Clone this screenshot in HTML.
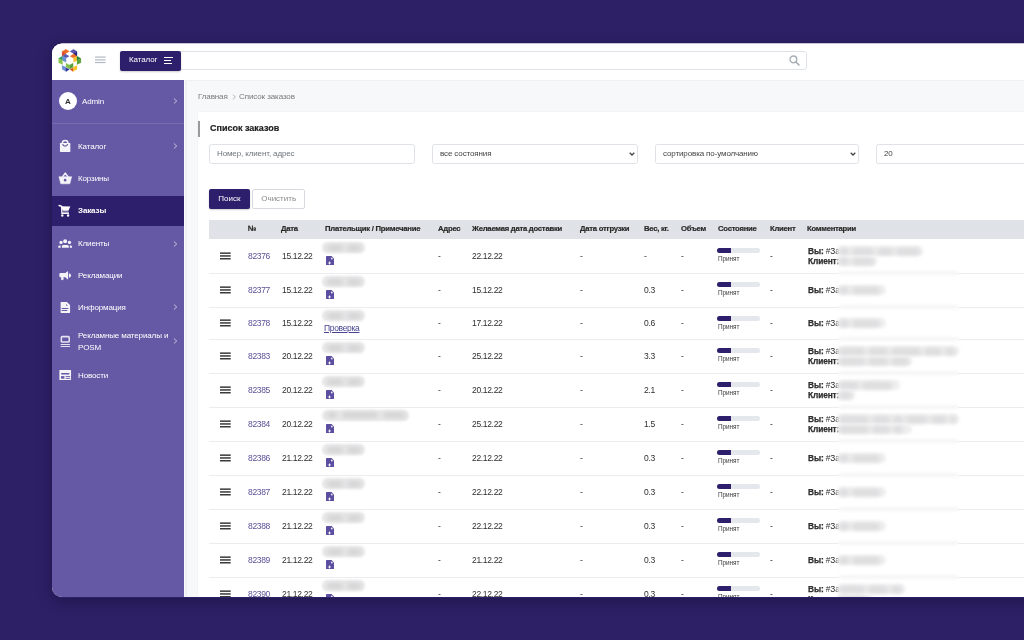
<!DOCTYPE html><html><head><meta charset="utf-8"><style>
*{margin:0;padding:0;box-sizing:border-box}
html,body{width:1024px;height:640px;overflow:hidden}
body{font-family:"Liberation Sans",sans-serif;background:#2c1f63;position:relative;color:#333}
.bgglow{position:absolute;left:0;top:0;width:1024px;height:640px;background:#2d2066}
.clip{position:absolute;left:0;top:0;width:1024px;height:640px;clip-path:inset(43.5px 0 43px 52px round 10px 0 0 10px);background:#f7f8fa}
.a{position:absolute}
.t{position:absolute;white-space:nowrap;line-height:10px;height:10px;will-change:transform}
.hdr{left:52px;top:43px;width:972px;height:37.2px;background:#fff;box-shadow:0 0.6px 1.5px rgba(0,0,0,.09)}
.side{left:52px;top:80px;width:132px;height:520px;background:#6559a5}
.menu{color:#fff;font-size:8px;letter-spacing:-0.12px}
.chev{position:absolute;width:4px;height:4px;border-right:1px solid rgba(255,255,255,.75);border-top:1px solid rgba(255,255,255,.75);transform:rotate(45deg)}
.card{left:198px;top:111.5px;width:830px;height:500px;background:#fff;box-shadow:0 0 1px rgba(0,0,0,.12)}
.inp{position:absolute;height:19.5px;border:1px solid #dfe2e7;border-radius:2.5px;background:#fff;font-size:8px;color:#6f757c;line-height:18.6px;padding-left:7px;white-space:nowrap;letter-spacing:-0.12px;will-change:transform}
.th{font-size:7.7px;font-weight:bold;color:#2a2a2a;letter-spacing:-0.25px;-webkit-text-stroke:0.2px #2a2a2a}
.cm{font-size:8.3px;color:#2e2e2e;letter-spacing:-0.1px}
.cm b{-webkit-text-stroke:0.25px #2e2e2e}
.td{font-size:8.5px;color:#2e2e2e;letter-spacing:-0.33px}
.num{color:#5b5196}
.burg{position:absolute;width:10.7px;height:7.4px;border-top:1.8px solid #3f3f3f;border-bottom:1.8px solid #3f3f3f}
.burg:after{content:"";position:absolute;left:0;right:0;top:1.0px;height:1.8px;background:#3f3f3f}
.blob{position:absolute;background:#d4d4d5;border-radius:4px;filter:blur(2.2px)}
.pill{position:absolute;background:#e8e8e9;border-radius:6px;filter:blur(1.1px)}
.cb{position:absolute;background:#dcdcde;border-radius:4px;filter:blur(2.2px);height:7px}
.cbp{position:absolute;background:#efeff0;border-radius:5px;filter:blur(1.8px);height:10px}
.bar{position:absolute;width:43px;height:4.5px;border-radius:3px;background:#e4e7ec}
.bar:before{content:"";position:absolute;left:0;top:0;width:14px;height:4.5px;border-radius:3px 0 0 3px;background:#2d1f6b}
.st{font-size:6.4px;color:#3d3d3d;letter-spacing:-0.05px}
</style></head><body>
<div class="bgglow"></div>
<div class="a" style="left:52px;top:43.5px;width:1000px;height:554px;border-radius:9px;box-shadow:0 3px 14px rgba(10,5,30,.35)"></div>
<div class="clip">
<div class="a hdr"></div>
<svg class="a" style="left:56px;top:47px" width="28" height="28" viewBox="0 0 640 640">
<polygon points="230,250 310,205 400,250 400,350 310,400 230,350" fill="#fff"/>
<polygon points="140,100 225,50 305,100 220,150" fill="#ee6a22" stroke="#ee6a22" stroke-width="6" stroke-linejoin="round"/>
<polygon points="140,100 220,150 220,160 150,210 140,205" fill="#cf4a25" stroke="#cf4a25" stroke-width="6" stroke-linejoin="round"/>
<polygon points="320,100 400,50 480,100 400,150" fill="#5d55ad" stroke="#5d55ad" stroke-width="6" stroke-linejoin="round"/>
<polygon points="400,150 480,100 480,205 450,215" fill="#262580" stroke="#262580" stroke-width="6" stroke-linejoin="round"/>
<polygon points="150,210 220,160 300,210 230,250" fill="#5a59b3" stroke="#5a59b3" stroke-width="6" stroke-linejoin="round"/>
<polygon points="320,210 400,160 480,210 400,250" fill="#ee6e25" stroke="#ee6e25" stroke-width="6" stroke-linejoin="round"/>
<polygon points="60,260 140,210 150,210 150,300 140,300" fill="#279a5b" stroke="#279a5b" stroke-width="6" stroke-linejoin="round"/>
<polygon points="150,210 230,250 230,350 150,310" fill="#6a8fd4" stroke="#6a8fd4" stroke-width="6" stroke-linejoin="round"/>
<polygon points="400,250 480,210 480,310 400,350" fill="#f7c12c" stroke="#f7c12c" stroke-width="6" stroke-linejoin="round"/>
<polygon points="480,210 570,260 480,300" fill="#1f7f3d" stroke="#1f7f3d" stroke-width="6" stroke-linejoin="round"/>
<polygon points="60,260 140,300 150,310 150,400 60,360" fill="#8cc44c" stroke="#8cc44c" stroke-width="6" stroke-linejoin="round"/>
<polygon points="480,300 570,260 570,360 480,400" fill="#5fa43a" stroke="#5fa43a" stroke-width="6" stroke-linejoin="round"/>
<polygon points="230,370 310,410 310,500 230,460" fill="#86c14b" stroke="#86c14b" stroke-width="6" stroke-linejoin="round"/>
<polygon points="310,410 390,370 390,460 310,500" fill="#56a03a" stroke="#56a03a" stroke-width="6" stroke-linejoin="round"/>
<polygon points="140,420 230,460 230,560 140,510" fill="#6c8fd5" stroke="#6c8fd5" stroke-width="6" stroke-linejoin="round"/>
<polygon points="230,480 305,510 230,560" fill="#27258a" stroke="#27258a" stroke-width="6" stroke-linejoin="round"/>
<polygon points="320,510 390,480 390,560" fill="#d9441f" stroke="#d9441f" stroke-width="6" stroke-linejoin="round"/>
<polygon points="390,460 480,420 480,510 390,560" fill="#f8c32a" stroke="#f8c32a" stroke-width="6" stroke-linejoin="round"/>
</svg>
<svg class="a" style="left:95px;top:55px" width="11" height="9" viewBox="0 0 11 9"><rect x="0" y="1.45" width="10.6" height="1.25" fill="#b6bcc5"/><rect x="0" y="4.25" width="10.6" height="1.25" fill="#b6bcc5"/><rect x="0" y="6.9" width="10.6" height="1.25" fill="#b6bcc5"/></svg>
<div class="a" style="left:178px;top:50.5px;width:629px;height:19.5px;border:1px solid #dfe3e8;border-radius:3px;background:#fff"></div>
<svg class="a" style="left:789px;top:55px" width="11" height="11" viewBox="0 0 11 11"><circle cx="4.4" cy="4.4" r="3.4" fill="none" stroke="#a9afb7" stroke-width="1.3"/><line x1="6.9" y1="6.9" x2="10" y2="10" stroke="#a9afb7" stroke-width="1.6" stroke-linecap="round"/></svg>
<div class="a" style="left:120px;top:50.5px;width:61px;height:20px;background:#2d1f6b;border-radius:2px;box-shadow:0 1px 2px rgba(0,0,0,.2)"></div>
<div class="t" style="left:129.3px;top:54.6px;color:#fff;font-size:8px;letter-spacing:-0.1px">Каталог</div>
<div class="a" style="left:164px;top:56.5px;width:9px;height:1px;background:#fff"></div>
<div class="a" style="left:164px;top:59.5px;width:6.5px;height:1px;background:#fff"></div>
<div class="a" style="left:164px;top:62.5px;width:8px;height:1px;background:#fff"></div>
<div class="a side"></div>
<div class="a" style="left:184px;top:80px;width:1.2px;height:520px;background:#fafaf7"></div>
<div class="a" style="left:185.2px;top:80px;width:2.2px;height:520px;background:#eff0f3"></div>
<div class="a" style="left:58.6px;top:92px;width:18px;height:18px;border-radius:50%;background:#fff"></div>
<div class="t" style="left:58.6px;top:96.5px;width:18px;text-align:center;font-size:8px;font-weight:bold;color:#333">A</div>
<div class="t menu" style="left:82px;top:96.5px">Admin</div>
<svg class="a" style="left:172px;top:96.5px" width="6" height="8" viewBox="0 0 6 8"><path d="M2.2,1.75 L4.7,4 L2.2,6.25" fill="none" stroke="rgba(255,255,255,.7)" stroke-width="0.9" stroke-linecap="round" stroke-linejoin="round"/></svg>
<div class="a" style="left:52px;top:123px;width:132px;height:1px;background:rgba(255,255,255,.12)"></div>
<div class="t menu" style="left:78px;top:141.5px;font-weight:normal">Каталог</div>
<svg class="a" style="left:56px;top:137px" width="18" height="18" viewBox="0 0 640 640"><rect x="140" y="210" width="370" height="320" rx="22" fill="#f4f3f8"/><path d="M225,215 C225,90 425,90 425,215" fill="none" stroke="#f4f3f8" stroke-width="55"/><path d="M235,255 C260,350 390,350 415,255" fill="none" stroke="#6559a5" stroke-width="45"/></svg>
<svg class="a" style="left:172px;top:142.2px" width="6" height="8" viewBox="0 0 6 8"><path d="M2.2,1.75 L4.7,4 L2.2,6.25" fill="none" stroke="rgba(255,255,255,.7)" stroke-width="0.9" stroke-linecap="round" stroke-linejoin="round"/></svg>
<div class="t menu" style="left:78px;top:173.5px;font-weight:normal">Корзины</div>
<svg class="a" style="left:56px;top:170px" width="18" height="18" viewBox="0 0 640 640"><path d="M230,245 L330,110 L430,245" fill="none" stroke="#f4f3f8" stroke-width="55" stroke-linejoin="round"/><path d="M105,240 L555,240 L490,490 L170,490 Z" fill="#f4f3f8" stroke="#f4f3f8" stroke-width="20" stroke-linejoin="round"/><circle cx="325" cy="360" r="45" fill="#6559a5"/></svg>
<div class="a" style="left:52px;top:196px;width:132px;height:29.6px;background:#2d1f6b"></div>
<div class="t menu" style="left:78px;top:206px;font-weight:bold">Заказы</div>
<svg class="a" style="left:56px;top:202px" width="18" height="18" viewBox="0 0 640 640"><path d="M110,125 L190,150" stroke="#fff" stroke-width="50" stroke-linecap="round"/><path d="M190,150 L510,160 L440,310 L240,310 Z" fill="#fff"/><path d="M200,160 L210,400 L460,400" fill="none" stroke="#fff" stroke-width="45"/><rect x="250" y="335" width="200" height="40" fill="#b9b3d6"/><circle cx="225" cy="478" r="42" fill="#fff"/><circle cx="430" cy="478" r="42" fill="#fff"/></svg>
<div class="t menu" style="left:78px;top:239px;font-weight:normal">Клиенты</div>
<svg class="a" style="left:56px;top:234px" width="18" height="18" viewBox="0 0 640 640"><circle cx="325" cy="260" r="70" fill="#f4f3f8"/><circle cx="180" cy="300" r="58" fill="#f4f3f8"/><circle cx="480" cy="300" r="58" fill="#f4f3f8"/><path d="M210,490 L210,440 Q210,390 270,390 L395,390 Q455,390 455,440 L455,490 Z" fill="#f4f3f8"/><path d="M80,490 L80,450 Q80,410 130,410 L165,410 L165,490 Z" fill="#f4f3f8"/><path d="M570,490 L570,450 Q570,410 520,410 L490,410 L490,490 Z" fill="#f4f3f8"/></svg>
<svg class="a" style="left:172px;top:239.7px" width="6" height="8" viewBox="0 0 6 8"><path d="M2.2,1.75 L4.7,4 L2.2,6.25" fill="none" stroke="rgba(255,255,255,.7)" stroke-width="0.9" stroke-linecap="round" stroke-linejoin="round"/></svg>
<div class="t menu" style="left:78px;top:270.5px;font-weight:normal">Рекламации</div>
<svg class="a" style="left:56px;top:266px" width="18" height="18" viewBox="0 0 640 640"><path d="M120,290 Q120,250 160,250 L330,250 L430,180 L430,490 L330,400 L160,400 Q120,400 120,360 Z" fill="#f4f3f8"/><rect x="180" y="380" width="90" height="125" rx="40" fill="#f4f3f8"/><path d="M460,255 Q535,265 535,335 Q535,405 460,415 Z" fill="#f4f3f8"/></svg>
<div class="t menu" style="left:78px;top:302.5px;font-weight:normal">Информация</div>
<svg class="a" style="left:56px;top:298px" width="18" height="18" viewBox="0 0 640 640"><path d="M165,155 Q165,140 180,140 L390,140 L500,250 L500,515 Q500,530 485,530 L180,530 Q165,530 165,515 Z" fill="#f4f3f8"/><path d="M355,210 L355,260 Q355,275 370,275 L420,275 Z" fill="#6559a5"/><path d="M215,375 L425,375 M215,445 L385,445" stroke="#6559a5" stroke-width="40" stroke-linecap="round"/></svg>
<svg class="a" style="left:172px;top:303.2px" width="6" height="8" viewBox="0 0 6 8"><path d="M2.2,1.75 L4.7,4 L2.2,6.25" fill="none" stroke="rgba(255,255,255,.7)" stroke-width="0.9" stroke-linecap="round" stroke-linejoin="round"/></svg>
<div class="t menu" style="left:78px;top:330.5px;">Рекламные материалы и</div>
<div class="t menu" style="left:78px;top:343px">POSM</div>
<svg class="a" style="left:172px;top:336.5px" width="6" height="8" viewBox="0 0 6 8"><path d="M2.2,1.75 L4.7,4 L2.2,6.25" fill="none" stroke="rgba(255,255,255,.7)" stroke-width="0.9" stroke-linecap="round" stroke-linejoin="round"/></svg>
<div class="t menu" style="left:78px;top:371px">Новости</div>
<svg class="a" style="left:56px;top:330px" width="18" height="18" viewBox="0 0 640 640"><rect x="190" y="235" width="280" height="195" rx="30" fill="none" stroke="#e6e3f0" stroke-width="55"/><path d="M165,515 L495,515 M165,585 L495,585" stroke="#e6e3f0" stroke-width="38"/></svg>
<svg class="a" style="left:56px;top:366px" width="18" height="18" viewBox="0 0 640 640"><rect x="120" y="140" width="415" height="360" rx="15" fill="#f4f3f8"/><rect x="180" y="250" width="300" height="50" rx="25" fill="#6559a5"/><rect x="180" y="360" width="120" height="90" fill="#6559a5"/><path d="M360,372 L490,372 M360,440 L490,440" stroke="#6559a5" stroke-width="32" stroke-linecap="round"/></svg>
<div class="t" style="left:197.9px;top:92px;font-size:8px;color:#7a7a7a;letter-spacing:-0.12px">Главная</div>
<svg class="a" style="left:231.5px;top:94px" width="5" height="6" viewBox="0 0 5 6"><path d="M0.8,0.6 L3.4,3 L0.8,5.4" fill="none" stroke="#999" stroke-width="0.7"/></svg>
<div class="t" style="left:238.7px;top:92px;font-size:8px;color:#7a7a7a;letter-spacing:-0.1px">Список заказов</div>
<div class="a card"></div>
<div class="a" style="left:198px;top:121px;width:1.8px;height:16px;background:#9a9a9a"></div>
<div class="t" style="left:209.7px;top:123px;font-size:9px;font-weight:bold;color:#1f1f1f;-webkit-text-stroke:0.2px #1f1f1f">Список заказов</div>
<div class="inp" style="left:209px;top:144px;width:206px">Номер, клиент, адрес</div>
<div class="inp" style="left:432px;top:144px;width:206px;color:#444">все состояния</div>
<div class="inp" style="left:655px;top:144px;width:204px;color:#444">сортировка по-умолчанию</div>
<svg class="a" style="left:629.3px;top:152px" width="6" height="4" viewBox="0 0 6 4"><path d="M0.7,0.8 L3,3 L5.3,0.8" fill="none" stroke="#444" stroke-width="1.3"/></svg>
<svg class="a" style="left:850.0px;top:152px" width="6" height="4" viewBox="0 0 6 4"><path d="M0.7,0.8 L3,3 L5.3,0.8" fill="none" stroke="#444" stroke-width="1.3"/></svg>
<div class="inp" style="left:876px;top:144px;width:206px;color:#444">20</div>
<div class="a" style="left:209.3px;top:189px;width:40.7px;height:19.5px;background:#2d1f6b;border-radius:2px;box-shadow:0 1px 2px rgba(0,0,0,.2)"></div>
<div class="t" style="left:209.3px;top:194.3px;width:40.7px;text-align:center;font-size:8px;color:#fff">Поиск</div>
<div class="a" style="left:252.2px;top:189px;width:53.3px;height:19.5px;border:1px solid #d6d9de;border-radius:2px;background:#fff"></div>
<div class="t" style="left:252.2px;top:194.3px;width:53.3px;text-align:center;font-size:8px;color:#888">Очистить</div>
<div class="a" style="left:209.2px;top:220px;width:820px;height:18.8px;background:#dfe2e6"></div>
<div class="t th" style="left:248.4px;top:223.8px">№</div>
<div class="t th" style="left:281.2px;top:223.8px">Дата</div>
<div class="t th" style="left:324.5px;top:223.8px">Плательщик / Примечание</div>
<div class="t th" style="left:437.5px;top:223.8px">Адрес</div>
<div class="t th" style="left:471.9px;top:223.8px">Желаемая дата доставки</div>
<div class="t th" style="left:579.8px;top:223.8px">Дата отгрузки</div>
<div class="t th" style="left:644.3px;top:223.8px">Вес, кг.</div>
<div class="t th" style="left:681px;top:223.8px">Объем</div>
<div class="t th" style="left:718px;top:223.8px">Состояние</div>
<div class="t th" style="left:769.6px;top:223.8px">Клиент</div>
<div class="t th" style="left:807px;top:223.8px">Комментарии</div>
<svg class="a" style="left:219.8px;top:252.0px" width="11" height="8" viewBox="0 0 11 8"><rect x="0" y="0.4" width="10.7" height="1.5" fill="#3a3a3a"/><rect x="0" y="3.2" width="10.7" height="1.5" fill="#3a3a3a"/><rect x="0" y="6.0" width="10.7" height="1.5" fill="#3a3a3a"/></svg>
<div class="t td num" style="left:248.2px;top:251.0px">82376</div>
<div class="t td" style="left:281.7px;top:251.0px">15.12.22</div>
<div class="pill" style="left:322px;top:242px;width:43px;height:11px"></div>
<div class="blob" style="left:327px;top:244.5px;width:16px;height:6px"></div>
<div class="blob" style="left:347px;top:244.5px;width:14px;height:6px"></div>
<svg class="a" style="left:325.9px;top:255.6px" width="8.3" height="9.9" viewBox="0 0 80 96"><path d="M6,0 L54,0 L80,26 L80,90 Q80,96 74,96 L6,96 Q0,96 0,90 L0,6 Q0,0 6,0 Z" fill="#5b4ea0"/><circle cx="56" cy="24" r="9" fill="#e8e6f4"/><path d="M34,46 L39,62 L54,67 L39,72 L34,88 L29,72 L14,67 L29,62 Z" fill="#fff"/></svg>
<div class="t td" style="left:438.3px;top:251.0px">-</div>
<div class="t td" style="left:472px;top:251.0px">22.12.22</div>
<div class="t td" style="left:580px;top:251.0px">-</div>
<div class="t td" style="left:644px;top:251.0px">-</div>
<div class="t td" style="left:681px;top:251.0px">-</div>
<div class="bar" style="left:717.2px;top:248.4px"></div>
<div class="t st" style="left:717.5px;top:254px">Принят</div>
<div class="t td" style="left:770px;top:251.0px">-</div>
<div class="t cm" style="left:807.5px;top:246px"><b>Вы:</b> #Зак</div>
<div class="t cm" style="left:807.5px;top:256px"><b>Клиент:</b></div>
<div class="a" style="left:209.2px;top:272.5px;width:820px;height:1px;background:#eaecef"></div>
<svg class="a" style="left:219.8px;top:286.0px" width="11" height="8" viewBox="0 0 11 8"><rect x="0" y="0.4" width="10.7" height="1.5" fill="#3a3a3a"/><rect x="0" y="3.2" width="10.7" height="1.5" fill="#3a3a3a"/><rect x="0" y="6.0" width="10.7" height="1.5" fill="#3a3a3a"/></svg>
<div class="t td num" style="left:248.2px;top:285.0px">82377</div>
<div class="t td" style="left:281.7px;top:285.0px">15.12.22</div>
<div class="pill" style="left:322px;top:276px;width:43px;height:11px"></div>
<div class="blob" style="left:327px;top:278.5px;width:16px;height:6px"></div>
<div class="blob" style="left:347px;top:278.5px;width:14px;height:6px"></div>
<svg class="a" style="left:325.9px;top:289.6px" width="8.3" height="9.9" viewBox="0 0 80 96"><path d="M6,0 L54,0 L80,26 L80,90 Q80,96 74,96 L6,96 Q0,96 0,90 L0,6 Q0,0 6,0 Z" fill="#5b4ea0"/><circle cx="56" cy="24" r="9" fill="#e8e6f4"/><path d="M34,46 L39,62 L54,67 L39,72 L34,88 L29,72 L14,67 L29,62 Z" fill="#fff"/></svg>
<div class="t td" style="left:438.3px;top:285.0px">-</div>
<div class="t td" style="left:472px;top:285.0px">15.12.22</div>
<div class="t td" style="left:580px;top:285.0px">-</div>
<div class="t td" style="left:644px;top:285.0px">0.3</div>
<div class="t td" style="left:681px;top:285.0px">-</div>
<div class="bar" style="left:717.2px;top:282.4px"></div>
<div class="t st" style="left:717.5px;top:288px">Принят</div>
<div class="t td" style="left:770px;top:285.0px">-</div>
<div class="t cm" style="left:807.5px;top:285.0px"><b>Вы:</b> #Зак</div>
<div class="a" style="left:209.2px;top:306.5px;width:820px;height:1px;background:#eaecef"></div>
<svg class="a" style="left:219.8px;top:319.0px" width="11" height="8" viewBox="0 0 11 8"><rect x="0" y="0.4" width="10.7" height="1.5" fill="#3a3a3a"/><rect x="0" y="3.2" width="10.7" height="1.5" fill="#3a3a3a"/><rect x="0" y="6.0" width="10.7" height="1.5" fill="#3a3a3a"/></svg>
<div class="t td num" style="left:248.2px;top:318.0px">82378</div>
<div class="t td" style="left:281.7px;top:318.0px">15.12.22</div>
<div class="pill" style="left:322px;top:310px;width:43px;height:11px"></div>
<div class="blob" style="left:327px;top:312.5px;width:16px;height:6px"></div>
<div class="blob" style="left:347px;top:312.5px;width:14px;height:6px"></div>
<div class="t td" style="left:324.4px;top:323px;color:#47438f;text-decoration:underline">Проверка</div>
<div class="t td" style="left:438.3px;top:318.0px">-</div>
<div class="t td" style="left:472px;top:318.0px">17.12.22</div>
<div class="t td" style="left:580px;top:318.0px">-</div>
<div class="t td" style="left:644px;top:318.0px">0.6</div>
<div class="t td" style="left:681px;top:318.0px">-</div>
<div class="bar" style="left:717.2px;top:316.4px"></div>
<div class="t st" style="left:717.5px;top:322px">Принят</div>
<div class="t td" style="left:770px;top:318.0px">-</div>
<div class="t cm" style="left:807.5px;top:318.0px"><b>Вы:</b> #Зак</div>
<div class="a" style="left:209.2px;top:338.5px;width:820px;height:1px;background:#eaecef"></div>
<svg class="a" style="left:219.8px;top:352.0px" width="11" height="8" viewBox="0 0 11 8"><rect x="0" y="0.4" width="10.7" height="1.5" fill="#3a3a3a"/><rect x="0" y="3.2" width="10.7" height="1.5" fill="#3a3a3a"/><rect x="0" y="6.0" width="10.7" height="1.5" fill="#3a3a3a"/></svg>
<div class="t td num" style="left:248.2px;top:351.0px">82383</div>
<div class="t td" style="left:281.7px;top:351.0px">20.12.22</div>
<div class="pill" style="left:322px;top:342px;width:43px;height:11px"></div>
<div class="blob" style="left:327px;top:344.5px;width:16px;height:6px"></div>
<div class="blob" style="left:347px;top:344.5px;width:14px;height:6px"></div>
<svg class="a" style="left:325.9px;top:355.6px" width="8.3" height="9.9" viewBox="0 0 80 96"><path d="M6,0 L54,0 L80,26 L80,90 Q80,96 74,96 L6,96 Q0,96 0,90 L0,6 Q0,0 6,0 Z" fill="#5b4ea0"/><circle cx="56" cy="24" r="9" fill="#e8e6f4"/><path d="M34,46 L39,62 L54,67 L39,72 L34,88 L29,72 L14,67 L29,62 Z" fill="#fff"/></svg>
<div class="t td" style="left:438.3px;top:351.0px">-</div>
<div class="t td" style="left:472px;top:351.0px">25.12.22</div>
<div class="t td" style="left:580px;top:351.0px">-</div>
<div class="t td" style="left:644px;top:351.0px">3.3</div>
<div class="t td" style="left:681px;top:351.0px">-</div>
<div class="bar" style="left:717.2px;top:348.4px"></div>
<div class="t st" style="left:717.5px;top:354px">Принят</div>
<div class="t td" style="left:770px;top:351.0px">-</div>
<div class="t cm" style="left:807.5px;top:346px"><b>Вы:</b> #Зак</div>
<div class="t cm" style="left:807.5px;top:356px"><b>Клиент:</b></div>
<div class="a" style="left:209.2px;top:372.5px;width:820px;height:1px;background:#eaecef"></div>
<svg class="a" style="left:219.8px;top:386.0px" width="11" height="8" viewBox="0 0 11 8"><rect x="0" y="0.4" width="10.7" height="1.5" fill="#3a3a3a"/><rect x="0" y="3.2" width="10.7" height="1.5" fill="#3a3a3a"/><rect x="0" y="6.0" width="10.7" height="1.5" fill="#3a3a3a"/></svg>
<div class="t td num" style="left:248.2px;top:385.0px">82385</div>
<div class="t td" style="left:281.7px;top:385.0px">20.12.22</div>
<div class="pill" style="left:322px;top:376px;width:43px;height:11px"></div>
<div class="blob" style="left:327px;top:378.5px;width:16px;height:6px"></div>
<div class="blob" style="left:347px;top:378.5px;width:14px;height:6px"></div>
<svg class="a" style="left:325.9px;top:389.6px" width="8.3" height="9.9" viewBox="0 0 80 96"><path d="M6,0 L54,0 L80,26 L80,90 Q80,96 74,96 L6,96 Q0,96 0,90 L0,6 Q0,0 6,0 Z" fill="#5b4ea0"/><circle cx="56" cy="24" r="9" fill="#e8e6f4"/><path d="M34,46 L39,62 L54,67 L39,72 L34,88 L29,72 L14,67 L29,62 Z" fill="#fff"/></svg>
<div class="t td" style="left:438.3px;top:385.0px">-</div>
<div class="t td" style="left:472px;top:385.0px">20.12.22</div>
<div class="t td" style="left:580px;top:385.0px">-</div>
<div class="t td" style="left:644px;top:385.0px">2.1</div>
<div class="t td" style="left:681px;top:385.0px">-</div>
<div class="bar" style="left:717.2px;top:382.4px"></div>
<div class="t st" style="left:717.5px;top:388px">Принят</div>
<div class="t td" style="left:770px;top:385.0px">-</div>
<div class="t cm" style="left:807.5px;top:380px"><b>Вы:</b> #Зак</div>
<div class="t cm" style="left:807.5px;top:390px"><b>Клиент:</b></div>
<div class="a" style="left:209.2px;top:406.5px;width:820px;height:1px;background:#eaecef"></div>
<svg class="a" style="left:219.8px;top:420.0px" width="11" height="8" viewBox="0 0 11 8"><rect x="0" y="0.4" width="10.7" height="1.5" fill="#3a3a3a"/><rect x="0" y="3.2" width="10.7" height="1.5" fill="#3a3a3a"/><rect x="0" y="6.0" width="10.7" height="1.5" fill="#3a3a3a"/></svg>
<div class="t td num" style="left:248.2px;top:419.0px">82384</div>
<div class="t td" style="left:281.7px;top:419.0px">20.12.22</div>
<div class="pill" style="left:322px;top:410px;width:87px;height:11px"></div>
<div class="blob" style="left:327px;top:412px;width:10px;height:6px"></div>
<div class="blob" style="left:342px;top:412px;width:36px;height:6px"></div>
<div class="blob" style="left:383px;top:412px;width:22px;height:6px"></div>
<svg class="a" style="left:325.9px;top:423.6px" width="8.3" height="9.9" viewBox="0 0 80 96"><path d="M6,0 L54,0 L80,26 L80,90 Q80,96 74,96 L6,96 Q0,96 0,90 L0,6 Q0,0 6,0 Z" fill="#5b4ea0"/><circle cx="56" cy="24" r="9" fill="#e8e6f4"/><path d="M34,46 L39,62 L54,67 L39,72 L34,88 L29,72 L14,67 L29,62 Z" fill="#fff"/></svg>
<div class="t td" style="left:438.3px;top:419.0px">-</div>
<div class="t td" style="left:472px;top:419.0px">25.12.22</div>
<div class="t td" style="left:580px;top:419.0px">-</div>
<div class="t td" style="left:644px;top:419.0px">1.5</div>
<div class="t td" style="left:681px;top:419.0px">-</div>
<div class="bar" style="left:717.2px;top:416.4px"></div>
<div class="t st" style="left:717.5px;top:422px">Принят</div>
<div class="t td" style="left:770px;top:419.0px">-</div>
<div class="t cm" style="left:807.5px;top:414px"><b>Вы:</b> #Зак</div>
<div class="t cm" style="left:807.5px;top:424px"><b>Клиент:</b></div>
<div class="a" style="left:209.2px;top:440.5px;width:820px;height:1px;background:#eaecef"></div>
<svg class="a" style="left:219.8px;top:454.0px" width="11" height="8" viewBox="0 0 11 8"><rect x="0" y="0.4" width="10.7" height="1.5" fill="#3a3a3a"/><rect x="0" y="3.2" width="10.7" height="1.5" fill="#3a3a3a"/><rect x="0" y="6.0" width="10.7" height="1.5" fill="#3a3a3a"/></svg>
<div class="t td num" style="left:248.2px;top:453.0px">82386</div>
<div class="t td" style="left:281.7px;top:453.0px">21.12.22</div>
<div class="pill" style="left:322px;top:444px;width:43px;height:11px"></div>
<div class="blob" style="left:327px;top:446.5px;width:16px;height:6px"></div>
<div class="blob" style="left:347px;top:446.5px;width:14px;height:6px"></div>
<svg class="a" style="left:325.9px;top:457.6px" width="8.3" height="9.9" viewBox="0 0 80 96"><path d="M6,0 L54,0 L80,26 L80,90 Q80,96 74,96 L6,96 Q0,96 0,90 L0,6 Q0,0 6,0 Z" fill="#5b4ea0"/><circle cx="56" cy="24" r="9" fill="#e8e6f4"/><path d="M34,46 L39,62 L54,67 L39,72 L34,88 L29,72 L14,67 L29,62 Z" fill="#fff"/></svg>
<div class="t td" style="left:438.3px;top:453.0px">-</div>
<div class="t td" style="left:472px;top:453.0px">22.12.22</div>
<div class="t td" style="left:580px;top:453.0px">-</div>
<div class="t td" style="left:644px;top:453.0px">0.3</div>
<div class="t td" style="left:681px;top:453.0px">-</div>
<div class="bar" style="left:717.2px;top:450.4px"></div>
<div class="t st" style="left:717.5px;top:456px">Принят</div>
<div class="t td" style="left:770px;top:453.0px">-</div>
<div class="t cm" style="left:807.5px;top:453.0px"><b>Вы:</b> #Зак</div>
<div class="a" style="left:209.2px;top:474.5px;width:820px;height:1px;background:#eaecef"></div>
<svg class="a" style="left:219.8px;top:488.0px" width="11" height="8" viewBox="0 0 11 8"><rect x="0" y="0.4" width="10.7" height="1.5" fill="#3a3a3a"/><rect x="0" y="3.2" width="10.7" height="1.5" fill="#3a3a3a"/><rect x="0" y="6.0" width="10.7" height="1.5" fill="#3a3a3a"/></svg>
<div class="t td num" style="left:248.2px;top:487.0px">82387</div>
<div class="t td" style="left:281.7px;top:487.0px">21.12.22</div>
<div class="pill" style="left:322px;top:478px;width:43px;height:11px"></div>
<div class="blob" style="left:327px;top:480.5px;width:16px;height:6px"></div>
<div class="blob" style="left:347px;top:480.5px;width:14px;height:6px"></div>
<svg class="a" style="left:325.9px;top:491.6px" width="8.3" height="9.9" viewBox="0 0 80 96"><path d="M6,0 L54,0 L80,26 L80,90 Q80,96 74,96 L6,96 Q0,96 0,90 L0,6 Q0,0 6,0 Z" fill="#5b4ea0"/><circle cx="56" cy="24" r="9" fill="#e8e6f4"/><path d="M34,46 L39,62 L54,67 L39,72 L34,88 L29,72 L14,67 L29,62 Z" fill="#fff"/></svg>
<div class="t td" style="left:438.3px;top:487.0px">-</div>
<div class="t td" style="left:472px;top:487.0px">22.12.22</div>
<div class="t td" style="left:580px;top:487.0px">-</div>
<div class="t td" style="left:644px;top:487.0px">0.3</div>
<div class="t td" style="left:681px;top:487.0px">-</div>
<div class="bar" style="left:717.2px;top:484.4px"></div>
<div class="t st" style="left:717.5px;top:490px">Принят</div>
<div class="t td" style="left:770px;top:487.0px">-</div>
<div class="t cm" style="left:807.5px;top:487.0px"><b>Вы:</b> #Зак</div>
<div class="a" style="left:209.2px;top:508.5px;width:820px;height:1px;background:#eaecef"></div>
<svg class="a" style="left:219.8px;top:522.0px" width="11" height="8" viewBox="0 0 11 8"><rect x="0" y="0.4" width="10.7" height="1.5" fill="#3a3a3a"/><rect x="0" y="3.2" width="10.7" height="1.5" fill="#3a3a3a"/><rect x="0" y="6.0" width="10.7" height="1.5" fill="#3a3a3a"/></svg>
<div class="t td num" style="left:248.2px;top:521.0px">82388</div>
<div class="t td" style="left:281.7px;top:521.0px">21.12.22</div>
<div class="pill" style="left:322px;top:512px;width:43px;height:11px"></div>
<div class="blob" style="left:327px;top:514.5px;width:16px;height:6px"></div>
<div class="blob" style="left:347px;top:514.5px;width:14px;height:6px"></div>
<svg class="a" style="left:325.9px;top:525.6px" width="8.3" height="9.9" viewBox="0 0 80 96"><path d="M6,0 L54,0 L80,26 L80,90 Q80,96 74,96 L6,96 Q0,96 0,90 L0,6 Q0,0 6,0 Z" fill="#5b4ea0"/><circle cx="56" cy="24" r="9" fill="#e8e6f4"/><path d="M34,46 L39,62 L54,67 L39,72 L34,88 L29,72 L14,67 L29,62 Z" fill="#fff"/></svg>
<div class="t td" style="left:438.3px;top:521.0px">-</div>
<div class="t td" style="left:472px;top:521.0px">22.12.22</div>
<div class="t td" style="left:580px;top:521.0px">-</div>
<div class="t td" style="left:644px;top:521.0px">0.3</div>
<div class="t td" style="left:681px;top:521.0px">-</div>
<div class="bar" style="left:717.2px;top:518.4px"></div>
<div class="t st" style="left:717.5px;top:524px">Принят</div>
<div class="t td" style="left:770px;top:521.0px">-</div>
<div class="t cm" style="left:807.5px;top:521.0px"><b>Вы:</b> #Зак</div>
<div class="a" style="left:209.2px;top:542.5px;width:820px;height:1px;background:#eaecef"></div>
<svg class="a" style="left:219.8px;top:556.0px" width="11" height="8" viewBox="0 0 11 8"><rect x="0" y="0.4" width="10.7" height="1.5" fill="#3a3a3a"/><rect x="0" y="3.2" width="10.7" height="1.5" fill="#3a3a3a"/><rect x="0" y="6.0" width="10.7" height="1.5" fill="#3a3a3a"/></svg>
<div class="t td num" style="left:248.2px;top:555.0px">82389</div>
<div class="t td" style="left:281.7px;top:555.0px">21.12.22</div>
<div class="pill" style="left:322px;top:546px;width:43px;height:11px"></div>
<div class="blob" style="left:327px;top:548.5px;width:16px;height:6px"></div>
<div class="blob" style="left:347px;top:548.5px;width:14px;height:6px"></div>
<svg class="a" style="left:325.9px;top:559.6px" width="8.3" height="9.9" viewBox="0 0 80 96"><path d="M6,0 L54,0 L80,26 L80,90 Q80,96 74,96 L6,96 Q0,96 0,90 L0,6 Q0,0 6,0 Z" fill="#5b4ea0"/><circle cx="56" cy="24" r="9" fill="#e8e6f4"/><path d="M34,46 L39,62 L54,67 L39,72 L34,88 L29,72 L14,67 L29,62 Z" fill="#fff"/></svg>
<div class="t td" style="left:438.3px;top:555.0px">-</div>
<div class="t td" style="left:472px;top:555.0px">21.12.22</div>
<div class="t td" style="left:580px;top:555.0px">-</div>
<div class="t td" style="left:644px;top:555.0px">0.3</div>
<div class="t td" style="left:681px;top:555.0px">-</div>
<div class="bar" style="left:717.2px;top:552.4px"></div>
<div class="t st" style="left:717.5px;top:558px">Принят</div>
<div class="t td" style="left:770px;top:555.0px">-</div>
<div class="t cm" style="left:807.5px;top:555.0px"><b>Вы:</b> #Зак</div>
<div class="a" style="left:209.2px;top:576.5px;width:820px;height:1px;background:#eaecef"></div>
<svg class="a" style="left:219.8px;top:590.0px" width="11" height="8" viewBox="0 0 11 8"><rect x="0" y="0.4" width="10.7" height="1.5" fill="#3a3a3a"/><rect x="0" y="3.2" width="10.7" height="1.5" fill="#3a3a3a"/><rect x="0" y="6.0" width="10.7" height="1.5" fill="#3a3a3a"/></svg>
<div class="t td num" style="left:248.2px;top:589.0px">82390</div>
<div class="t td" style="left:281.7px;top:589.0px">21.12.22</div>
<div class="pill" style="left:322px;top:580px;width:43px;height:11px"></div>
<div class="blob" style="left:327px;top:582.5px;width:16px;height:6px"></div>
<div class="blob" style="left:347px;top:582.5px;width:14px;height:6px"></div>
<svg class="a" style="left:325.9px;top:593.6px" width="8.3" height="9.9" viewBox="0 0 80 96"><path d="M6,0 L54,0 L80,26 L80,90 Q80,96 74,96 L6,96 Q0,96 0,90 L0,6 Q0,0 6,0 Z" fill="#5b4ea0"/><circle cx="56" cy="24" r="9" fill="#e8e6f4"/><path d="M34,46 L39,62 L54,67 L39,72 L34,88 L29,72 L14,67 L29,62 Z" fill="#fff"/></svg>
<div class="t td" style="left:438.3px;top:589.0px">-</div>
<div class="t td" style="left:472px;top:589.0px">22.12.22</div>
<div class="t td" style="left:580px;top:589.0px">-</div>
<div class="t td" style="left:644px;top:589.0px">0.3</div>
<div class="t td" style="left:681px;top:589.0px">-</div>
<div class="bar" style="left:717.2px;top:586.4px"></div>
<div class="t st" style="left:717.5px;top:592px">Принят</div>
<div class="t td" style="left:770px;top:589.0px">-</div>
<div class="t cm" style="left:807.5px;top:584px"><b>Вы:</b> #Зак</div>
<div class="t cm" style="left:807.5px;top:594px"><b>Клиент:</b></div>
<div class="a" style="left:209.2px;top:610.5px;width:820px;height:1px;background:#eaecef"></div>
<div class="a" style="left:839px;top:239px;width:119px;height:360px;background:#fff"></div>
<div class="cbp" style="left:837px;top:246.0px;width:86px"></div>
<div class="cb" style="left:839px;top:247.5px;width:10px"></div>
<div class="cb" style="left:852px;top:247.5px;width:22px"></div>
<div class="cb" style="left:877px;top:247.5px;width:16px"></div>
<div class="cb" style="left:896px;top:247.5px;width:24px"></div>
<div class="cbp" style="left:837px;top:256.0px;width:40px"></div>
<div class="cb" style="left:839px;top:257.5px;width:10px"></div>
<div class="cb" style="left:852px;top:257.5px;width:22px"></div>
<div class="a" style="left:839px;top:271px;width:119px;height:4px;background:#f6f6f7;filter:blur(1.5px)"></div>
<div class="cbp" style="left:837px;top:285.0px;width:49px"></div>
<div class="cb" style="left:839px;top:286.5px;width:10px"></div>
<div class="cb" style="left:852px;top:286.5px;width:28px"></div>
<div class="a" style="left:839px;top:305px;width:119px;height:4px;background:#f6f6f7;filter:blur(1.5px)"></div>
<div class="cbp" style="left:837px;top:318.0px;width:49px"></div>
<div class="cb" style="left:839px;top:319.5px;width:10px"></div>
<div class="cb" style="left:852px;top:319.5px;width:28px"></div>
<div class="a" style="left:839px;top:337px;width:119px;height:4px;background:#f6f6f7;filter:blur(1.5px)"></div>
<div class="cbp" style="left:837px;top:346.0px;width:122px"></div>
<div class="cb" style="left:839px;top:347.5px;width:26px"></div>
<div class="cb" style="left:868px;top:347.5px;width:20px"></div>
<div class="cb" style="left:891px;top:347.5px;width:30px"></div>
<div class="cb" style="left:924px;top:347.5px;width:18px"></div>
<div class="cb" style="left:945px;top:347.5px;width:10px"></div>
<div class="cbp" style="left:837px;top:356.0px;width:75px"></div>
<div class="cb" style="left:839px;top:357.5px;width:26px"></div>
<div class="cb" style="left:868px;top:357.5px;width:20px"></div>
<div class="cb" style="left:891px;top:357.5px;width:18px"></div>
<div class="a" style="left:839px;top:371px;width:119px;height:4px;background:#f6f6f7;filter:blur(1.5px)"></div>
<div class="cbp" style="left:837px;top:380.0px;width:63px"></div>
<div class="cb" style="left:839px;top:381.5px;width:20px"></div>
<div class="cb" style="left:862px;top:381.5px;width:30px"></div>
<div class="cbp" style="left:837px;top:390.0px;width:18px"></div>
<div class="cb" style="left:839px;top:391.5px;width:13px"></div>
<div class="a" style="left:839px;top:405px;width:119px;height:4px;background:#f6f6f7;filter:blur(1.5px)"></div>
<div class="cbp" style="left:837px;top:414.0px;width:122px"></div>
<div class="cb" style="left:839px;top:415.5px;width:30px"></div>
<div class="cb" style="left:872px;top:415.5px;width:18px"></div>
<div class="cb" style="left:893px;top:415.5px;width:10px"></div>
<div class="cb" style="left:906px;top:415.5px;width:22px"></div>
<div class="cb" style="left:931px;top:415.5px;width:16px"></div>
<div class="cb" style="left:950px;top:415.5px;width:6px"></div>
<div class="cbp" style="left:837px;top:424.0px;width:75px"></div>
<div class="cb" style="left:839px;top:425.5px;width:30px"></div>
<div class="cb" style="left:872px;top:425.5px;width:18px"></div>
<div class="cb" style="left:893px;top:425.5px;width:10px"></div>
<div class="a" style="left:839px;top:439px;width:119px;height:4px;background:#f6f6f7;filter:blur(1.5px)"></div>
<div class="cbp" style="left:837px;top:453.0px;width:49px"></div>
<div class="cb" style="left:839px;top:454.5px;width:10px"></div>
<div class="cb" style="left:852px;top:454.5px;width:28px"></div>
<div class="a" style="left:839px;top:473px;width:119px;height:4px;background:#f6f6f7;filter:blur(1.5px)"></div>
<div class="cbp" style="left:837px;top:487.0px;width:49px"></div>
<div class="cb" style="left:839px;top:488.5px;width:10px"></div>
<div class="cb" style="left:852px;top:488.5px;width:28px"></div>
<div class="a" style="left:839px;top:507px;width:119px;height:4px;background:#f6f6f7;filter:blur(1.5px)"></div>
<div class="cbp" style="left:837px;top:521.0px;width:49px"></div>
<div class="cb" style="left:839px;top:522.5px;width:10px"></div>
<div class="cb" style="left:852px;top:522.5px;width:28px"></div>
<div class="a" style="left:839px;top:541px;width:119px;height:4px;background:#f6f6f7;filter:blur(1.5px)"></div>
<div class="cbp" style="left:837px;top:555.0px;width:49px"></div>
<div class="cb" style="left:839px;top:556.5px;width:10px"></div>
<div class="cb" style="left:852px;top:556.5px;width:28px"></div>
<div class="a" style="left:839px;top:575px;width:119px;height:4px;background:#f6f6f7;filter:blur(1.5px)"></div>
<div class="cbp" style="left:837px;top:584.0px;width:68px"></div>
<div class="cb" style="left:839px;top:585.5px;width:26px"></div>
<div class="cb" style="left:868px;top:585.5px;width:20px"></div>
<div class="cb" style="left:891px;top:585.5px;width:11px"></div>
<div class="cbp" style="left:837px;top:594.0px;width:36px"></div>
<div class="cb" style="left:839px;top:595.5px;width:26px"></div>
<div class="a" style="left:839px;top:609px;width:119px;height:4px;background:#f6f6f7;filter:blur(1.5px)"></div>
</div>
</body></html>
